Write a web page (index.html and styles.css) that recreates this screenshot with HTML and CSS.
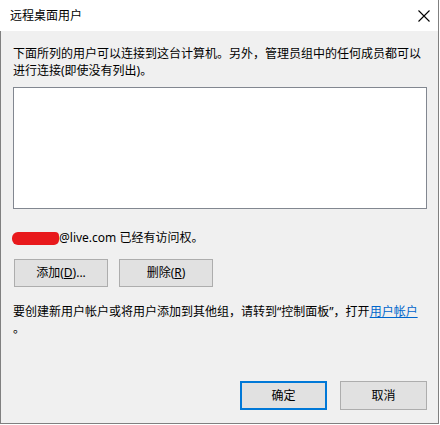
FILE: index.html
```html
<!DOCTYPE html>
<html lang="zh-CN">
<head>
<meta charset="utf-8">
<link rel="stylesheet" href="styles.css">
</head>
<body>
<div class="window">
  <div class="titlebar">
    <span class="title">远程桌面用户</span>
    <svg class="close" width="12" height="12" viewBox="0 0 12 12"><path d="M0.5 0.5 L11.5 11.5 M11.5 0.5 L0.5 11.5" stroke="#000" stroke-width="1.1" fill="none"/></svg>
  </div>
  <div class="content">
    <p class="desc">下面所列的用户可以连接到这台计算机。另外，管理员组中的任何成员都可以<br>进行连接(即使没有列出)。</p>
    <div class="listbox"></div>
    <p class="access"><span class="redact"></span>@live.com 已经有访问权。</p>
    <div class="actions">
      <button class="btn btn-small">添加(<u>D</u>)...</button>
      <button class="btn btn-small">删除(<u>R</u>)</button>
    </div>
    <p class="hint">要创建新用户帐户或将用户添加到其他组，请转到“控制面板”，打开<a class="link" href="#">用户帐户</a><br>。</p>
    <div class="footer">
      <button class="btn btn-dialog btn-primary">确定</button>
      <button class="btn btn-dialog">取消</button>
    </div>
  </div>
</div>
</body>
</html>
```
FILE: styles.css
```css
html, body {
  margin: 0;
  padding: 0;
  background: #ffffff;
}
body {
  font-family: "Noto Sans", "Noto Sans CJK SC", sans-serif;
  font-size: 12px;
  color: #000;
}
.window {
  width: 438px;
  height: 423px;
  border-right: 1px solid #808080;
  border-bottom: 1px solid #808080;
  display: flex;
  flex-direction: column;
}
.titlebar {
  height: 31px;
  background: #ffffff;
  display: flex;
  align-items: center;
  justify-content: space-between;
  padding: 0 8px 0 10px;
  box-sizing: border-box;
}
.title {
  font-size: 12px;
  line-height: 16px;
}
.close {
  display: block;
  margin-top: 1px;
}
.content {
  flex: 1;
  background: #f0f0f0;
  border-left: 1px solid #808080;
  padding: 14px 11px 13px 12px;
  display: flex;
  flex-direction: column;
}
.desc, .access, .hint {
  margin: 0;
  line-height: 17px;
  white-space: nowrap;
}
.listbox {
  margin-top: 8px;
  height: 122px;
  box-sizing: border-box;
  background: #ffffff;
  border: 1px solid #828790;
}
.access {
  margin-top: 20px;
  display: flex;
  align-items: center;
}
.redact {
  display: inline-block;
  width: 47px;
  height: 13px;
  background: #e8191c;
  border-radius: 6px 4px 5px 6px;
  margin-left: -1px;
  margin-top: 2px;
}
.actions {
  margin-top: 13px;
  margin-left: 1px;
  display: flex;
  gap: 11px;
}
.btn {
  box-sizing: border-box;
  font-family: "Noto Sans", "Noto Sans CJK SC", sans-serif;
  font-size: 12px;
  color: #000;
  background: #e1e1e1;
  border: 1px solid #adadad;
  padding: 0;
  line-height: 16px;
}
.btn-small {
  width: 94px;
  height: 28px;
}
.hint {
  margin-top: 16px;
}
.link {
  color: #0066cc;
  text-decoration: underline;
}
.footer {
  margin-top: auto;
  display: flex;
  justify-content: flex-end;
  gap: 13px;
}
.btn-dialog {
  width: 87px;
  height: 29px;
}
.btn-primary {
  border: 2px solid #0078d7;
}
```
